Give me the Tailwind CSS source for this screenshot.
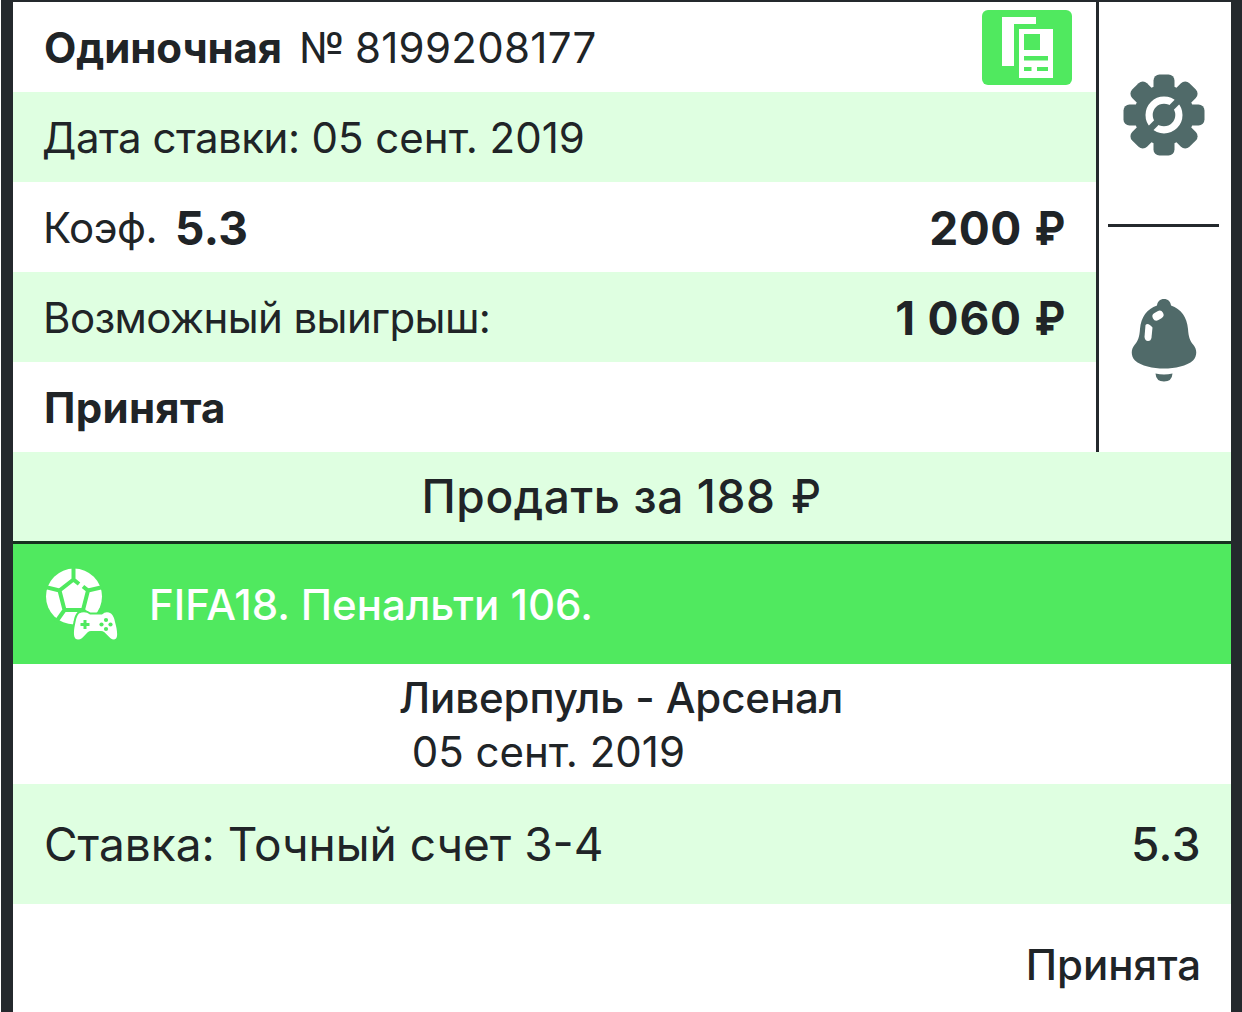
<!DOCTYPE html>
<html lang="ru">
<head>
  <meta charset="UTF-8" />
  <meta name="viewport" content="width=device-width, initial-scale=1.0"/>
  <title>Купон № 8199208177</title>
  <script src="https://cdn.jsdelivr.net/npm/@tailwindcss/browser@4"></script>
  <style>
    body { font-family: 'Inter', 'Liberation Sans', sans-serif; }
  </style>
</head>
<body class="bg-white text-[#202427] overflow-hidden">

  <div class="h-[1012px] ml-px border-t-2 border-l-12 border-r-11 border-[#24292d] flex flex-col whitespace-nowrap leading-none text-[42px]">

    <div class="flex h-[450px] shrink-0">
      <!-- Данные купона -->
      <div class="flex-1">
        <div class="h-[90px] pt-0.5 pl-[31px] pr-6 flex items-center">
          <span class="font-bold tracking-[-0.1px]">Одиночная</span>
          <span class="ml-[17px]">№<span class="ml-2.5 tracking-[0.3px]">8199208177</span></span>
          <button class="ml-auto -mt-0.5 w-[90px] h-[75px] rounded-md bg-[#50e95f]">
            <svg class="block" width="90" height="75" viewBox="0 0 90 75">
              <path fill="#fff" d="M20 7h34v7H32v42H20z"/>
              <path fill="#fff" stroke="#50e95f" stroke-width="8" paint-order="stroke" d="M37 19h34v49H37z"/>
              <path fill="#50e95f" d="M42 24h16v16H42zM42 46h24v4.500H42zM42 57h7.500v4H42zM55 57h11v4H55z"/>
            </svg>
          </button>
        </div>
        <div class="h-[90px] pt-0.5 pl-[29px] pr-8 flex items-center bg-[#dfffe1]">
          <span class="tracking-[-0.5px]">Дата ставки:</span>
          <span class="ml-3">05 сент. 2019</span>
        </div>
        <div class="h-[90px] pt-px pl-[30px] pr-[31px] flex items-center">
          <span class="tracking-[-0.5px]">Коэф.</span>
          <span class="ml-[18px] text-[46px] font-bold tracking-[0.3px]">5.3</span>
          <span class="ml-auto text-[46px] font-bold tracking-[0.5px]">200</span>
          <span class="ml-[9px] text-[46px] font-bold origin-right scale-x-90">₽</span>
        </div>
        <div class="h-[90px] pt-px pl-[30px] pr-[31px] flex items-center bg-[#dfffe1]">
          <span class="tracking-[-0.6px]">Возможный выигрыш:</span>
          <span class="ml-auto text-[46px] font-bold tracking-[0.8px]">1 060</span>
          <span class="ml-[9px] text-[46px] font-bold origin-right scale-x-90">₽</span>
        </div>
        <div class="h-[90px] pt-0.5 pl-[31px] flex items-center font-bold tracking-[0.3px]">Принята</div>
      </div>

      <!-- Действия -->
      <div class="w-[135px] border-l-3 border-[#24292d] pr-[3px] flex flex-col items-center">
        <div class="h-[222px] flex items-center">
          <svg width="82" height="82" viewBox="-41 -41 82 82" class="mt-1">
            <g fill="#506a69">
              <circle r="30"/>
              <rect x="-10.500" y="-40.500" width="21" height="81" rx="6"/>
              <rect x="-40.500" y="-10.500" width="81" height="21" rx="6"/>
              <rect x="-10.500" y="-40.500" width="21" height="81" rx="6" transform="rotate(45)"/>
              <rect x="-10.500" y="-40.500" width="21" height="81" rx="6" transform="rotate(-45)"/>
            </g>
            <circle r="14.900" fill="none" stroke="#fff" stroke-width="7.200"/>
            <path stroke="#506a69" stroke-width="6.500" d="M-15 15L15-15"/>
          </svg>
        </div>
        <div class="w-[111px] h-[3px] bg-[#24292d]"></div>
        <div class="h-[225px] flex items-center">
          <svg width="66" height="84" viewBox="0 0 66 84" class="mt-0.5">
            <path fill="#506a69" d="M33 0C37 0 39.500 2.500 40 6.500C50 10 56 18 57 30C57.500 38 59 42 62.500 46C66 50 66.500 57 62 61.500C56 67 44 69.500 33 69.500S10 67 4 61.500C-.5 57 0 50 3.500 46C7 42 8.500 38 9 30C10 18 16 10 26 6.500C26.500 2.500 29 0 33 0z"/>
            <path fill="#506a69" d="M24.500 74.500Q33 76.500 41.500 74.500Q41 82.500 33 82.500T24.500 74.500z"/>
            <path fill="none" stroke="#fff" stroke-width="8" stroke-linecap="round" d="M25.500 17.500L28.500 15.800"/>
            <path fill="#fff" d="M14.500 26Q17 23 21.500 28.500L20.500 38.500Q20 42 17 42T13.500 38z"/>
          </svg>
        </div>
      </div>
    </div>

    <button class="h-[92px] shrink-0 pb-px pr-0.5 border-b-3 border-[#17301f] bg-[#dfffe1] text-[46px] font-medium flex items-center justify-center">
      <span class="tracking-[0.6px]">Продать за 188</span>
      <span class="ml-3 origin-right scale-x-90">₽</span>
    </button>

    <!-- Событие -->
    <div class="h-[120px] shrink-0 pt-px pl-8 flex items-center bg-[#50e95f] text-white">
      <svg width="73" height="73" viewBox="0 0 73 73">
        <circle cx="29" cy="28.500" r="28" fill="#fff"/>
        <g fill="none" stroke="#50e95f" stroke-width="4">
          <path d="M28.500 11.500L14.500 22.500L19.500 42H38L43 22.500L38 18.500M34 16L28.500 11.500V-1M14.500 22.500L0 19M43 22.500L58 19M19.500 42L11 54M38 42L44 48"/>
        </g>
        <path fill="#fff" stroke="#50e95f" stroke-width="4" paint-order="stroke" d="M34 45.500Q40 42.500 45 46.500H57Q61 42.500 66 45.500Q69 48 70 54C72 61 74 71.500 69 71.500C64 71.500 61 63 56 63H46C41 63 39 71.500 33 71.500C27 71.500 29 61 30.500 54Q31.500 48 34 45.500z"/>
        <path fill="none" stroke="#50e95f" stroke-width="3" d="M35.500 56.500h9M40 52v9"/>
        <g fill="#50e95f">
          <circle cx="61" cy="52" r="2.100"/>
          <circle cx="61" cy="61" r="2.100"/>
          <circle cx="56.500" cy="56.500" r="2.100"/>
          <circle cx="65.500" cy="56.500" r="2.100"/>
        </g>
      </svg>
      <span class="ml-[31px] font-medium">FIFA18. Пенальти 106.</span>
    </div>

    <div class="h-[120px] shrink-0 pr-0.5 flex justify-center">
      <div class="pt-[13px]">
        <div class="font-medium tracking-[-0.1px]">Ливерпуль - Арсенал</div>
        <div class="mt-3 ml-[13px]">05 сент. 2019</div>
      </div>
    </div>

    <div class="h-[120px] shrink-0 pl-[31px] pr-[30px] flex items-center justify-between bg-[#dfffe1] text-[46px]">
      <span>Ставка: Точный счет 3-4</span>
      <span class="font-medium tracking-[0.4px]">5.3</span>
    </div>

    <div class="h-[120px] shrink-0 pt-px px-[30px] flex items-center justify-end font-medium">Принята</div>
  </div>

</body>
</html>
